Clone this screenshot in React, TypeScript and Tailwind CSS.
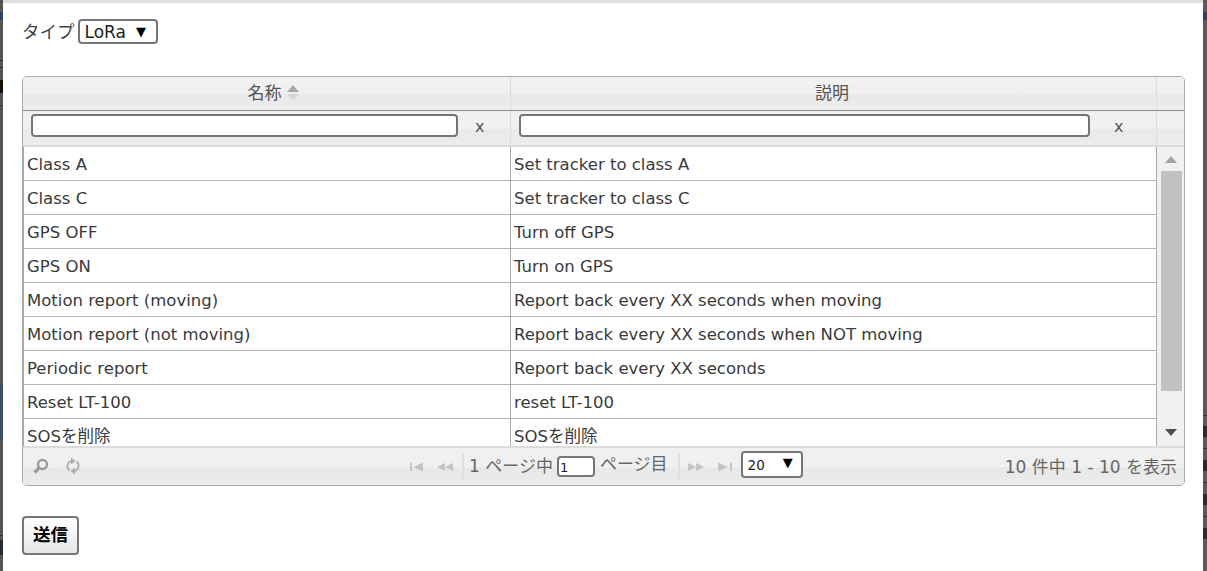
import React from "react";

const rows: [string, string][] = [
  ["Class A", "Set tracker to class A"],
  ["Class C", "Set tracker to class C"],
  ["GPS OFF", "Turn off GPS"],
  ["GPS ON", "Turn on GPS"],
  ["Motion report (moving)", "Report back every XX seconds when moving"],
  ["Motion report (not moving)", "Report back every XX seconds when NOT moving"],
  ["Periodic report", "Report back every XX seconds"],
  ["Reset LT-100", "reset LT-100"],
  ["SOSを削除", "SOSを削除"],
];

const font = "font-['DejaVu_Sans','Noto_Sans_CJK_JP',sans-serif]";

function Filter({ col, input, gap }: { col: string; input: string; gap: string }) {
  return (
    <div className={`${col} flex items-center h-full pl-[8px] border-r border-[#dcdcdc]`}>
      <div className={`${input} h-[23px] -mt-[5px] bg-white border-2 border-[#767676] rounded-[4px] shrink-0`} />
      <span className={`${gap} -mt-[2px] text-[16px] text-[#555] leading-none`}>x</span>
    </div>
  );
}

export default function App() {
  return (
    <div className={`${font} h-[571px] w-[1207px] overflow-hidden bg-[#555555] flex`}>
      <div className="w-[3px] shrink-0 bg-[linear-gradient(#555_0,#555_12px,#2c4463_12px,#2c4463_20px,#555_20px,#555_60px,#333_60px,#333_61px,#555_61px,#555_67px,#333_67px,#333_68px,#555_68px,#555_80px,#1a1208_80px,#1a1208_93px,#555_93px,#555_105px,#333_105px,#333_106px,#555_106px,#555_385px,#3a4f6c_385px,#3a4f6c_440px,#555_440px,#555_535px,#333_535px,#333_536px,#555_536px,#555_540px,#222b36_540px,#222b36_555px,#555_555px)]" />
      <div className="flex-1 bg-white border-t-[3px] border-[#dedede] text-[#444] flex flex-col">
        <div className="flex items-center h-[25px] mt-[16px] pl-[19px] text-[17.5px]">
          <span className="mt-[2px]">タイプ</span>
          <div className="ml-[3px] w-[80px] h-[25px] border-2 border-[#767676] rounded-[4px] flex items-center pl-[5px] text-[17px] text-[#222] shrink-0">
            <span className="mt-[2px]">LoRa</span>
            <span className="ml-[10px] text-[13px] text-black">▼</span>
          </div>
        </div>

        <div className="ml-[19px] mr-[18px] mt-[32px] h-[410px] border border-[#aaaaaa] rounded-[5px] overflow-hidden flex flex-col shrink-0">
          <div className="h-[34px] flex border-b border-[#8f8f8f] bg-[linear-gradient(#f2f2f2,#efefef_50%,#e9e9e9_55%,#ececec)] text-[17px] text-[#555] shrink-0">
            <div className="w-[488px] flex items-center justify-center border-r border-[#dcdcdc] pl-[14px] pt-[1px]">
              <span>名称</span>
              <svg width="14" height="18" viewBox="0 0 14 18" className="ml-[4px] -mt-[2px]">
                <polygon points="7,1 13,8 1,8" fill="#a8a8a8" />
                <polygon points="1,10 13,10 7,16" fill="#d4d4d4" />
              </svg>
            </div>
            <div className="w-[646px] flex items-center justify-center border-r border-[#dcdcdc] pr-[3px] pt-[1px]">説明</div>
            <div className="flex-1" />
          </div>
          <div className="h-[36px] flex border-b-[2px] border-[#dcdcdc] bg-[linear-gradient(#f0f0f0,#f2f2f2_50%,#e9e9e9_55%,#ececec)] shrink-0">
            <Filter col="w-[488px]" input="w-[427px]" gap="ml-[17px]" />
            <Filter col="w-[646px]" input="w-[571px]" gap="ml-[24px]" />
            <div className="flex-1" />
          </div>

          <div className="flex-1 min-h-0 flex overflow-hidden">
            <div className="w-[1134px] border-l border-[#aaaaaa] border-r border-r-[#aaaaaa] overflow-hidden text-[16.5px] text-[#3a3a3a]">
              {rows.map(([a, b], i) => (
                <div key={i} className="flex h-[34px] border-b border-[#b4b4b4]">
                  <div className="w-[487px] pl-[3px] pt-[3px] flex items-center border-r border-[#aaaaaa] whitespace-nowrap">{a}</div>
                  <div className="flex-1 pl-[3px] pt-[3px] flex items-center whitespace-nowrap">{b}</div>
                </div>
              ))}
            </div>
            <div className="flex-1 bg-[#f1f1f1] flex flex-col items-center pl-[1px]">
              <svg width="12" height="7" viewBox="0 0 12 7" className="mt-[9px]">
                <polygon points="6,0 12,7 0,7" fill="#a3a3a3" />
              </svg>
              <div className="w-[21px] h-[220px] mt-[8px] bg-[#c1c1c1]" />
              <div className="flex-1" />
              <svg width="12" height="7" viewBox="0 0 12 7" className="mb-[10px]">
                <polygon points="0,0 12,0 6,7" fill="#505050" />
              </svg>
            </div>
          </div>

          <div className="h-[39px] shrink-0 flex items-center border-t-[2px] border-[#dcdcdc] bg-[linear-gradient(#f0f0f0,#f0f0f0_50%,#e8e8e8_55%,#ececec)] text-[#666] text-[17px]">
            <svg width="18" height="18" viewBox="0 0 18 18" className="ml-[9px] -mt-[2px] shrink-0">
              <circle cx="10.5" cy="7.5" r="4.5" fill="none" stroke="#9c9c9c" strokeWidth="2.4" />
              <line x1="7" y1="11" x2="2.5" y2="15.5" stroke="#9c9c9c" strokeWidth="3.2" />
            </svg>
            <svg width="16" height="18" viewBox="0 0 16 18" className="ml-[15px] -mt-[2px] shrink-0">
              <path d="M4.5 13.5A5.5 5.5 0 0 1 6 4M11.5 4.5A5.5 5.5 0 0 1 10 14" fill="none" stroke="#adadad" strokeWidth="1.8" />
              <polygon points="6,0.5 10.5,4 6,7.5" fill="#adadad" />
              <polygon points="10,10.5 5.5,14 10,17.5" fill="#adadad" />
            </svg>
            <div className="ml-[329px] flex items-center h-full shrink-0">
              <svg width="14" height="10" viewBox="0 0 14 10" className="shrink-0">
                <rect x="0" y="1" width="2" height="8" fill="#c4c4c4" />
                <polygon points="3,5 13,0.5 13,9.5" fill="#c4c4c4" />
              </svg>
              <svg width="17" height="10" viewBox="0 0 17 10" className="ml-[13px] shrink-0">
                <polygon points="0,5 8,1 8,9" fill="#c4c4c4" />
                <polygon points="8,5 16,1 16,9" fill="#c4c4c4" />
              </svg>
              <div className="ml-[8px] w-[2px] h-[26px] bg-[#e0e0e0]" />
              <span className="ml-[5px] whitespace-nowrap">1 ページ中</span>
              <div className="ml-[4px] w-[38px] h-[21px] bg-white border-2 border-[#767676] rounded-[4px] text-[13px] text-[#222] leading-[19px] pl-[1px] shrink-0">1</div>
              <span className="ml-[5px] -mt-[3px] whitespace-nowrap">ページ目</span>
              <div className="ml-[10px] w-[2px] h-[26px] bg-[#e0e0e0]" />
              <svg width="18" height="10" viewBox="0 0 18 10" className="ml-[8px] shrink-0">
                <polygon points="0,1 8,5 0,9" fill="#c4c4c4" />
                <polygon points="8,1 16,5 8,9" fill="#c4c4c4" />
              </svg>
              <svg width="16" height="10" viewBox="0 0 16 10" className="ml-[12px] shrink-0">
                <polygon points="0,0.5 10,5 0,9.5" fill="#c4c4c4" />
                <rect x="12" y="1" width="2" height="8" fill="#c4c4c4" />
              </svg>
              <div className="ml-[7px] w-[62px] h-[27px] -mt-[5px] bg-white border-2 border-[#767676] rounded-[4px] flex items-center pl-[5px] text-[13.5px] text-[#222] shrink-0">
                <span className="mt-[2px]">20</span>
                <span className="ml-[18px] text-[13px] text-black -mt-[2px]">▼</span>
              </div>
            </div>
            <span className="ml-auto mr-[7px] mt-[2px] whitespace-nowrap">10 件中 1 - 10 を表示</span>
          </div>
        </div>

        <div className="ml-[19px] mt-[30px] w-[57px] h-[39px] border-2 border-[#767676] rounded-[4px] bg-[linear-gradient(#ffffff,#e6e6e6)] flex items-center justify-center text-[17.5px] font-bold text-black shrink-0">
          送信
        </div>
      </div>
      <div className="w-[4px] shrink-0 bg-[linear-gradient(#5a5a5a_0,#5a5a5a_12px,#2c4463_12px,#2c4463_20px,#5a5a5a_20px,#5a5a5a_415px,#333_415px,#333_416px,#5a5a5a_416px,#5a5a5a_426px,#2a2a2a_426px,#2a2a2a_437px,#5a5a5a_437px,#5a5a5a_448px,#333_448px,#333_449px,#5a5a5a_449px,#5a5a5a_460px,#2a2a2a_460px,#2a2a2a_471px,#5a5a5a_471px,#5a5a5a_482px,#333_482px,#333_483px,#5a5a5a_483px,#5a5a5a_494px,#2a2a2a_494px,#2a2a2a_505px,#5a5a5a_505px,#5a5a5a_516px,#333_516px,#333_517px,#5a5a5a_517px,#5a5a5a_528px,#2a2a2a_528px,#2a2a2a_539px,#5a5a5a_539px)]" />
    </div>
  );
}
